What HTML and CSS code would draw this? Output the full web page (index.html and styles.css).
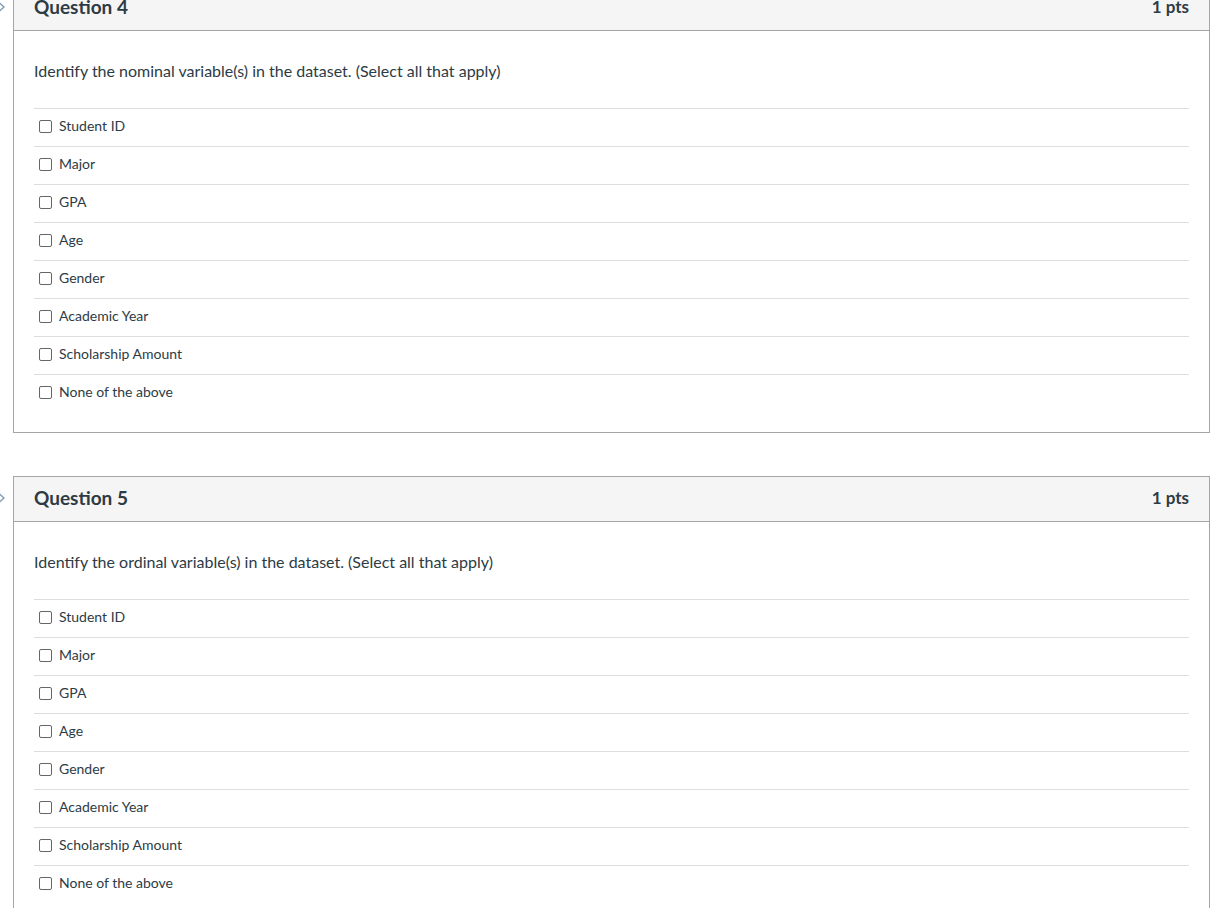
FILE: index.html
```html
<!DOCTYPE html>
<html>
<head>
<meta charset="utf-8">
<link rel="stylesheet" href="styles.css">
</head>
<body>
<div class="page">
  <div class="qrow">
    <div class="gutter"><svg class="chev" width="8" height="12" viewBox="0 0 8 12"><path d="M-1 1.5 L4 6 L-1 10.5" fill="none" stroke="#7d96b0" stroke-width="1.3"/></svg></div>
    <div class="question">
      <div class="qhead"><span class="qname">Question 4</span><span class="pts">1 pts</span></div>
      <div class="qbody">
        <p class="qtext">Identify the nominal variable(s) in the dataset. (Select all that apply)</p>
        <ul class="answers">
          <li><span class="cb"></span>Student ID</li>
          <li><span class="cb"></span>Major</li>
          <li><span class="cb"></span>GPA</li>
          <li><span class="cb"></span>Age</li>
          <li><span class="cb"></span>Gender</li>
          <li><span class="cb"></span>Academic Year</li>
          <li><span class="cb"></span>Scholarship Amount</li>
          <li><span class="cb"></span>None of the above</li>
        </ul>
      </div>
    </div>
  </div>
  <div class="qrow">
    <div class="gutter"><svg class="chev" width="8" height="12" viewBox="0 0 8 12"><path d="M-1 1.5 L4 6 L-1 10.5" fill="none" stroke="#7d96b0" stroke-width="1.3"/></svg></div>
    <div class="question">
      <div class="qhead"><span class="qname">Question 5</span><span class="pts">1 pts</span></div>
      <div class="qbody">
        <p class="qtext">Identify the ordinal variable(s) in the dataset. (Select all that apply)</p>
        <ul class="answers">
          <li><span class="cb"></span>Student ID</li>
          <li><span class="cb"></span>Major</li>
          <li><span class="cb"></span>GPA</li>
          <li><span class="cb"></span>Age</li>
          <li><span class="cb"></span>Gender</li>
          <li><span class="cb"></span>Academic Year</li>
          <li><span class="cb"></span>Scholarship Amount</li>
          <li><span class="cb"></span>None of the above</li>
        </ul>
      </div>
    </div>
  </div>
</div>
</body>
</html>
```

FILE: styles.css
```css
html, body {
  margin: 0;
  padding: 0;
  background: #fff;
  overflow: hidden;
}
body {
  font-family: Lato, "Liberation Sans", sans-serif;
  color: #2d3b45;
}
.page {
  margin-top: -15px;
  width: 1210px;
  display: flex;
  flex-direction: column;
  gap: 43px;
}
.qrow {
  display: flex;
  align-items: flex-start;
}
.gutter {
  width: 13px;
  flex: none;
  height: 44px;
  display: flex;
  align-items: center;
}
.chev { display: block; }
.question {
  flex: 1;
  border: 1px solid #a5a5a5;
}
.qhead {
  background: #f5f5f5;
  border-bottom: 1px solid #a5a5a5;
  display: flex;
  align-items: center;
  justify-content: space-between;
  padding: 0 20px 4px;
  box-sizing: border-box;
  height: 45px;
}
.qname {
  font-size: 19px;
  font-weight: bold;
}
.pts {
  font-size: 17px;
  font-weight: bold;
}
.qbody {
  padding: 28px 20px 20px;
}
.qtext {
  margin: 0 0 25px;
  font-size: 16px;
  line-height: 24px;
}
.answers {
  list-style: none;
  margin: 0;
  padding: 0;
}
.answers li {
  border-top: 1px solid #dddddd;
  display: flex;
  align-items: center;
  font-size: 14px;
  padding-bottom: 5px;
  box-sizing: border-box;
  height: 38px;
}
.cb {
  width: 11px;
  height: 11px;
  border: 1px solid #666;
  border-radius: 2px;
  margin: 2px 7px 0 5px;
  flex: none;
}
```
